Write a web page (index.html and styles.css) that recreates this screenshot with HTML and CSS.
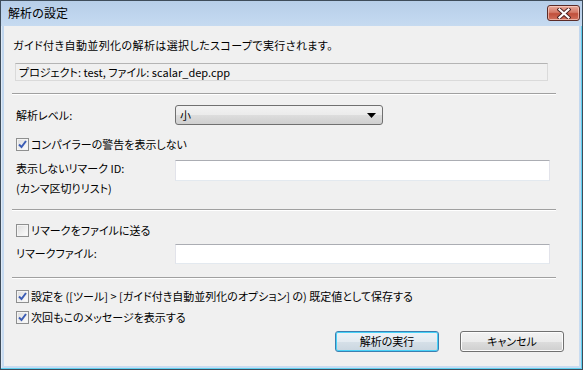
FILE: index.html
```html
<!DOCTYPE html>
<html lang="ja">
<head>
<meta charset="utf-8">
<title>解析の設定</title>
<link rel="stylesheet" href="styles.css">
</head>
<body>
<div class="window">
  <div class="titlebar">
    <span class="title">解析の設定</span>
    <div class="close">
      <svg width="14" height="11" viewBox="0 0 14 11"><path d="M2.5 1.5 L11.5 9.5 M11.5 1.5 L2.5 9.5" stroke="#4a2020" stroke-width="4" stroke-linecap="square"/><path d="M2.5 1.5 L11.5 9.5 M11.5 1.5 L2.5 9.5" stroke="#ffffff" stroke-width="2.2" stroke-linecap="square"/></svg>
    </div>
  </div>
  <div class="client">
    <p class="intro">ガイド付き自動並列化の解析は選択したスコープで実行されます。</p>
    <div class="readonly">プロジェクト: test, ファイル: scalar_dep.cpp</div>
    <div class="sep s1"></div>
    <div class="row r-level">
      <span class="label">解析レベル:</span>
      <div class="combo"><span>小</span><svg width="9" height="5" viewBox="0 0 9 5"><path d="M0 0 H9 L4.5 5 Z" fill="#000"/></svg></div>
    </div>
    <div class="check c1"><span class="box on"><svg width="9" height="9" viewBox="0 0 9 9"><path d="M1 4.5 L3.5 7 L8 1" fill="none" stroke="#3c5db5" stroke-width="2"/></svg></span>コンパイラーの警告を表示しない</div>
    <div class="row r-remark">
      <span class="label lt">表示しないリマーク ID:</span>
      <div class="input"></div>
    </div>
    <div class="note">(カンマ区切りリスト)</div>
    <div class="sep s2"></div>
    <div class="check c2"><span class="box"></span>リマークをファイルに送る</div>
    <div class="row r-file">
      <span class="label lt2">リマークファイル:</span>
      <div class="input"></div>
    </div>
    <div class="sep s3"></div>
    <div class="check c3"><span class="box on"><svg width="9" height="9" viewBox="0 0 9 9"><path d="M1 4.5 L3.5 7 L8 1" fill="none" stroke="#3c5db5" stroke-width="2"/></svg></span>設定を ([ツール] &gt; [ガイド付き自動並列化のオプション] の) 既定値として保存する</div>
    <div class="check c4"><span class="box on"><svg width="9" height="9" viewBox="0 0 9 9"><path d="M1 4.5 L3.5 7 L8 1" fill="none" stroke="#3c5db5" stroke-width="2"/></svg></span>次回もこのメッセージを表示する</div>
    <div class="buttons">
      <div class="btn default">解析の実行</div>
      <div class="btn">キャンセル</div>
    </div>
  </div>
</div>
</body>
</html>
```

FILE: styles.css
```css
* { box-sizing: border-box; }
html, body { margin: 0; padding: 0; }
body {
  width: 584px;
  height: 370px;
  overflow: hidden;
  background: #ffffff;
  font-family: "Noto Sans CJK JP", "Noto Sans", sans-serif;
  font-size: 11px;
  font-feature-settings: "palt";
  letter-spacing: 0;
  color: #000;
}
.window {
  width: 583px;
  height: 370px;
  border: 1px solid #3e4c5a;
  background: linear-gradient(#c0d6ee, #c9dcf1);
  box-shadow: inset -1px -1px 0 #5fd0f0, inset 1px 0 0 #dfeaf6;
  display: flex;
  flex-direction: column;
}
.titlebar {
  height: 25px;
  flex: none;
  display: flex;
  align-items: flex-start;
  justify-content: space-between;
  padding: 0 2px 0 7px;
  background: linear-gradient(#b7cee8, #bfd5ee 60%, #c6daf0);
}
.title {
  font-size: 12px;
  font-feature-settings: normal;
  line-height: 24px;
}
.close {
  margin-top: 4px;
  width: 33px;
  height: 16px;
  border: 1px solid #5b2b27;
  border-radius: 3px;
  background: linear-gradient(#e9a99a, #d47a68 45%, #c04f3b 55%, #d0705c);
  box-shadow: inset 0 0 0 1px rgba(255,220,210,0.6);
  display: flex;
  align-items: center;
  justify-content: center;
}
.client {
  flex: 1;
  margin: 0 3px 3px 3px;
  background: #f0f0f0;
  display: flex;
  flex-direction: column;
  padding-left: 12px;
}
.intro {
  margin: 12px 0 0 -3px;
  line-height: 14px;
  height: 14px;
  letter-spacing: 0.4px;
}
.readonly {
  margin: 11px 0 0 -1px;
  width: 533px;
  height: 18px;
  border: 1px solid #dadada;
  border-top-color: #b4b4b4;
  background: #f0f0f0;
  padding-left: 3px;
  line-height: 16px;
}
.sep {
  margin-left: -4px;
  width: 544px;
  height: 2px;
  border-top: 1px solid #a0a0a0;
  border-bottom: 1px solid #ffffff;
}
.s1 { margin-top: 12px; }
.s2 { margin-top: 14px; }
.s3 { margin-top: 13px; }
.row {
  display: flex;
  align-items: flex-start;
}
.label {
  width: 159px;
  flex: none;
  line-height: 14px;
}
.r-level { margin-top: 10px; height: 20px; }
.r-level .label { margin-top: 3px; }
.combo {
  width: 208px;
  height: 20px;
  border: 1px solid #707070;
  border-radius: 3px;
  background: linear-gradient(#f2f2f2, #ebebeb 50%, #dddddd 51%, #cfcfcf);
  display: flex;
  align-items: center;
  justify-content: space-between;
  padding: 0 6px 0 4px;
}
.check {
  display: flex;
  align-items: center;
  height: 14px;
  line-height: 14px;
}
.box {
  width: 13px;
  height: 13px;
  flex: none;
  margin-right: 2px;
  border: 1px solid #8e8f8f;
  background: linear-gradient(135deg, #dcdcdc, #fefefe);
  box-shadow: inset 0 0 0 1px #f4f4f4;
  display: flex;
  align-items: center;
  justify-content: center;
}
.c1 { margin-top: 12px; }
.c2 { margin-top: 12px; }
.c3 { margin-top: 10px; }
.c4 { margin-top: 7px; }
.r-remark { margin-top: 9px; height: 21px; }
.lt { margin-top: 1px; }
.input {
  width: 375px;
  height: 21px;
  background: #fff;
  border: 1px solid #e2e3ea;
  border-top-color: #abadb3;
  border-bottom-color: #e3e9ef;
}
.note {
  line-height: 14px;
  height: 14px;
}
.r-file { margin-top: 7px; height: 20px; }
.r-file .input { height: 20px; }
.lt2 { margin-top: 2px; }
.buttons {
  margin-top: 7px;
  display: flex;
  justify-content: flex-end;
  gap: 21px;
  padding-right: 15px;
}
.btn {
  width: 104px;
  height: 21px;
  border: 1px solid #707070;
  border-radius: 3px;
  background: linear-gradient(#f2f2f2, #ebebeb 50%, #dddddd 51%, #cfcfcf);
  box-shadow: inset 0 0 0 1px #fcfcfc;
  text-align: center;
  line-height: 19px;
}
.btn.default {
  border-color: #3c7fb1;
  background: linear-gradient(#eef3f7, #e4ebf1 50%, #d6e0e8 51%, #cad6e0);
  box-shadow: inset 0 0 0 1px #48d2f8;
}
```
